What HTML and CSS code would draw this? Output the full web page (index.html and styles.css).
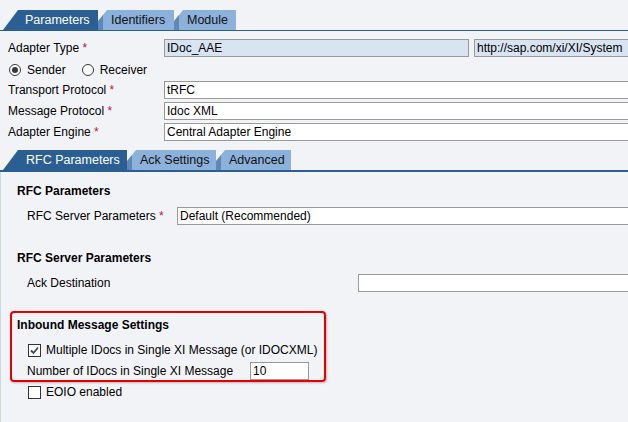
FILE: index.html
```html
<!DOCTYPE html>
<html>
<head>
<meta charset="utf-8">
<link rel="stylesheet" href="styles.css">
</head>
<body>
<div class="page">
<div class="tabbar top">
  <div class="tab active first">Parameters</div>
  <div class="tab t-ident">Identifiers</div>
  <div class="tab t-mod">Module</div>
</div>
<div class="form">
  <div class="row">
    <div class="label">Adapter Type <span class="req">*</span></div>
    <div class="field ro w305">IDoc_AAE</div>
    <div class="field ro wrest">http://sap.com/xi/XI/System</div>
  </div>
  <div class="row radios">
    <span class="radio checked"></span><span class="rlabel">Sender</span>
    <span class="radio"></span><span class="rlabel">Receiver</span>
  </div>
  <div class="row">
    <div class="label">Transport Protocol <span class="req">*</span></div>
    <div class="field grow">tRFC</div>
  </div>
  <div class="row">
    <div class="label">Message Protocol <span class="req">*</span></div>
    <div class="field grow">Idoc XML</div>
  </div>
  <div class="row">
    <div class="label">Adapter Engine <span class="req">*</span></div>
    <div class="field grow">Central Adapter Engine</div>
  </div>
</div>
<div class="tabbar sub">
  <div class="tab active first rfc">RFC Parameters</div>
  <div class="tab t-ack">Ack Settings</div>
  <div class="tab t-adv">Advanced</div>
</div>
<div class="panel">
  <div class="heading">RFC Parameters</div>
  <div class="row srow">
    <div class="label l2">RFC Server Parameters <span class="req">*</span></div>
    <div class="field grow">Default (Recommended)</div>
  </div>
  <div class="heading h2">RFC Server Parameters</div>
  <div class="row srow">
    <div class="label l3">Ack Destination</div>
    <div class="field grow"></div>
  </div>
  <div class="redbox">
    <div class="heading hb">Inbound Message Settings</div>
    <div class="row crow">
      <span class="check checked"><svg width="11" height="11" viewBox="0 0 11 11"><path d="M2 5.5 L4.5 8 L9 2.5" fill="none" stroke="#3a4a63" stroke-width="1.8"/></svg></span>
      <span class="clabel">Multiple IDocs in Single XI Message (or IDOCXML)</span>
    </div>
    <div class="row nrow">
      <div class="label l4">Number of IDocs in Single XI Message</div>
      <div class="field small">10</div>
    </div>
  </div>
  <div class="row crow eoio">
    <span class="check"></span>
    <span class="clabel">EOIO enabled</span>
  </div>
</div>
</div>
</body>
</html>
```
FILE: styles.css
```css
html, body {
  margin: 0;
  padding: 0;
  background: #f2f3f7;
  font-family: "Liberation Sans", Arial, sans-serif;
  font-size: 12px;
  color: #000;
}
.page {
  width: 628px;
  height: 422px;
  overflow: hidden;
}
.tabbar {
  display: flex;
  height: 20px;
  align-items: stretch;
}
.tabbar.top {
  margin-top: 10px;
  border-bottom: 1px solid #2b5f94;
}
.tabbar.sub {
  margin-top: 9px;
  border-bottom: 2px solid #2b5f94;
}
.tab {
  display: flex;
  align-items: center;
  box-sizing: border-box;
  font-size: 12.5px;
  color: #111;
  background: linear-gradient(to right, #5e88b8 0, #5e88b8 5px, #8cb2dc 5px);
  clip-path: polygon(0 100%, 0 11px, 9px 0, 100% 0, 100% 100%);
  padding-left: 13px;
  white-space: nowrap;
}
.tab.active {
  background: #2b5f94;
  color: #fff;
}
.tab.first {
  margin-left: 3px;
  width: 95px;
  padding-left: 22px;
  clip-path: polygon(0 100%, 15px 0, 100% 0, 100% 100%);
}
.t-ident { width: 76px; }
.t-mod { width: 62px; }
.tab.rfc { width: 124px; padding-left: 23px; }
.t-ack { width: 89px; }
.t-adv { width: 75px; }

.form {
  padding-left: 8px;
  padding-top: 8px;
}
.row {
  display: flex;
  align-items: center;
  height: 18px;
  margin-bottom: 3px;
}
.label {
  width: 156px;
  flex: none;
  white-space: nowrap;
  color: #000;
}
.req { color: #c8102e; }
.field {
  box-sizing: border-box;
  height: 18px;
  border: 1px solid #9a9a9a;
  background: #fff;
  padding-left: 2px;
  line-height: 16px;
  white-space: nowrap;
  overflow: hidden;
  flex: none;
}
.field.grow {
  flex: 1;
  margin-right: -4px;
  border-right: none;
}
.field.ro { background: #d9e4f2; }
.w305 { width: 305px; }
.wrest { flex: 1; margin-left: 5px; margin-right: -4px; border-right: none; }
.radios { padding-left: 1px; }
.radio {
  box-sizing: border-box;
  width: 12px;
  height: 12px;
  border: 1px solid #3a3a3a;
  border-radius: 50%;
  background: #fff;
  display: inline-flex;
  align-items: center;
  justify-content: center;
  flex: none;
  margin-top: 2px;
}
.radio.checked::after {
  content: "";
  width: 6px;
  height: 6px;
  border-radius: 50%;
  background: #3a3a3a;
}
.rlabel { margin-left: 6px; margin-right: 16px; margin-top: 2px; }

.panel {
  border-left: 1px solid #cdd8e6;
  padding-top: 11px;
  padding-left: 16px;
  height: 260px;
}
.heading {
  font-weight: bold;
  height: 16px;
  line-height: 16px;
}
.srow { margin-top: 8px; }
.l2 { padding-left: 10px; width: 160px; box-sizing: border-box; }
.l3 { padding-left: 10px; width: 341px; box-sizing: border-box; }
.h2 { margin-top: 25px; }
.redbox {
  margin-top: 19px;
  margin-left: -7px;
  width: 316px;
  height: 71px;
  box-sizing: border-box;
  border: 2px solid #e60000;
  border-radius: 4px;
  box-shadow: 1px 1px 2px rgba(0,0,0,0.25);
  padding-left: 5px;
  padding-top: 4px;
}
.hb { margin-bottom: 8px; }
.crow { padding-left: 11px; }
.check {
  box-sizing: border-box;
  width: 13px;
  height: 13px;
  border: 1px solid #333;
  background: #fff;
  display: inline-flex;
  align-items: center;
  justify-content: center;
  flex: none;
}
.clabel { margin-left: 5px; white-space: nowrap; }
.nrow { margin-bottom: 0; }
.l4 { padding-left: 10px; width: 233px; box-sizing: border-box; }
.small { width: 59px; }
.eoio { margin-top: 1px; }
```
